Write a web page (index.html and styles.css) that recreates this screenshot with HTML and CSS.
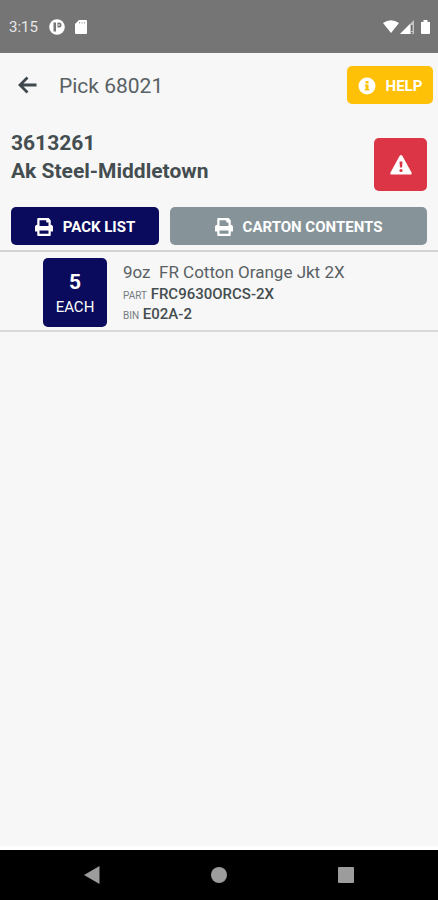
FILE: index.html
```html
<!DOCTYPE html>
<html lang="en">
<head>
<meta charset="utf-8">
<meta name="viewport" content="width=device-width, initial-scale=1">
<title>Pick 68021</title>
<link rel="stylesheet" href="styles.css">
</head>
<body>
<svg class="defs" width="0" height="0" aria-hidden="true"><symbol id="print" viewBox="0 0 512 512"><path fill="#fff" d="M448 192V77.250c0-8.490-3.370-16.620-9.370-22.630L393.370 9.370c-6-6-14.140-9.370-22.630-9.370H96C78.330 0 64 14.330 64 32v160c-35.350 0-64 28.650-64 64v112c0 8.840 7.160 16 16 16h48v96c0 17.670 14.330 32 32 32h320c17.670 0 32-14.330 32-32v-96h48c8.840 0 16-7.160 16-16V256c0-35.350-28.650-64-64-64zm-64 256H128v-96h256v96zm0-224H128V64h192v48c0 8.840 7.160 16 16 16h48v96z"/></symbol></svg>
<div class="status">
  <span class="clock">3:15</span>
  <svg class="dot" width="16" height="16" viewBox="0 0 16 16" aria-hidden="true"><circle cx="8" cy="8" r="7.800" fill="#fff"/><path d="M4.500 3.500h2.500v9H4.500zM8.500 3.500h1.500a2.500 2.500 0 0 1 0 5H8.500z" fill="#757575"/><circle cx="10" cy="6" r=".8" fill="#fff"/></svg>
  <svg class="card" width="12" height="14" viewBox="0 0 12 14" aria-hidden="true"><path d="M4 0h7a1 1 0 0 1 1 1v12a1 1 0 0 1-1 1H1a1 1 0 0 1-1-1V4z" fill="#fff"/><path d="M4 2h1v1.500H4zM6.500 2h1v1.500h-1zM9 2h1v1.500H9z" fill="#a5a5a5"/></svg>
  <svg class="signals" width="48" height="16" viewBox="0 0 48 16" aria-hidden="true"><path d="M0 4Q8-1.500 16 4L8 14z" fill="#fff"/><path d="M17 15 31 1v14z" fill="#c4c4c4"/><path d="M17 15 27 5v10z" fill="#fff"/><path d="M28 6h1.500v6H28zM28 13h1.500v1.500H28z" fill="#666"/><path d="M38 3h2.500V1h4v2H47v11a1 1 0 0 1-1 1h-7a1 1 0 0 1-1-1z" fill="#fff"/></svg>
</div>
<header class="header">
  <button class="back" type="button" aria-label="Back"><svg width="20" height="18" viewBox="0 0 20 18"><path d="M18.500 9H3M9.500 1.500 2 9l7.500 7.500" fill="none" stroke="#3f484c" stroke-width="2.800"/></svg></button>
  <h1>Pick 68021</h1>
  <button class="btn help" type="button"><svg width="18" height="18" viewBox="0 0 18 18" aria-hidden="true"><circle cx="9" cy="9" r="8.500" fill="#fff"/><path d="M7.500 4h3v2.500h-3zM7 7.500h3.500v4.500h.7v1.500H6.800V12h.7V9H7z" fill="#ffc107"/></svg>HELP</button>
</header>
<main>
  <section class="order">
    <h2>3613261<br>Ak Steel-Middletown</h2>
    <button class="btn alert" type="button" aria-label="Report a problem"><svg width="22" height="20" viewBox="0 0 22 20"><path d="M9.700.8a1.500 1.500 0 0 1 2.600 0l9.200 16.700a1.400 1.400 0 0 1-1.200 2.100H1.700a1.400 1.400 0 0 1-1.200-2.100z" fill="#fff"/><path d="M9.500 6.500h3l-.4 6H9.900z" fill="#dc3545"/><circle cx="11" cy="15.500" r="1.600" fill="#dc3545"/></svg></button>
  </section>
  <div class="actions">
    <button class="btn pack" type="button"><svg width="18" height="18" aria-hidden="true"><use href="#print"/></svg>PACK LIST</button>
    <button class="btn carton" type="button"><svg width="18" height="18" aria-hidden="true"><use href="#print"/></svg>CARTON CONTENTS</button>
  </div>
  <section class="item">
    <button class="btn qty" type="button"><strong>5</strong><span>EACH</span></button>
    <div class="details">
      <p class="name">9oz&nbsp; FR Cotton Orange Jkt 2X</p>
      <p class="meta"><span>PART</span> <b>FRC9630ORCS-2X</b></p>
      <p class="meta"><span>BIN</span> <b>E02A-2</b></p>
    </div>
  </section>
</main>
<nav class="nav" aria-label="System">
  <button type="button" aria-label="Back"><svg width="18" height="20" viewBox="0 0 18 20"><path d="M1 10 16.500 1v18z" fill="#9c9c9c"/></svg></button>
  <button type="button" aria-label="Home"><svg width="18" height="18" viewBox="0 0 18 18"><circle cx="9" cy="9" r="8" fill="#9c9c9c"/></svg></button>
  <button type="button" aria-label="Recent apps"><svg width="18" height="18" viewBox="0 0 18 18"><rect x="1" y="1" width="16" height="16" rx="1" fill="#9c9c9c"/></svg></button>
</nav>
</body>
</html>
```
FILE: styles.css
```css
* { box-sizing: border-box; }
body {
  margin: 0;
  min-height: 100vh;
  display: flex;
  flex-direction: column;
  background: #f7f7f7;
  color: #444d50;
  font-family: Roboto, "Liberation Sans", sans-serif;
}
h1, h2, p { margin: 0; }
button { border: 0; padding: 0; background: none; font: inherit; color: inherit; }
svg { display: block; flex: none; }
.defs { position: absolute; }

.status {
  display: flex;
  align-items: center;
  height: 53px;
  padding: 1px 7px 0 9px;
  background: #757575;
  color: #e8e8e8;
  font-size: 15px;
}
.dot { margin-left: 11px; }
.card { margin-left: 10px; }
.signals { margin-left: auto; }

.header {
  display: flex;
  align-items: center;
  height: 64px;
  padding: 0 5px 0 18px;
}
h1 { margin-left: 21px; font-size: 21px; line-height: 28px; padding-top: 2px; font-weight: 400; color: #596164; }

.btn {
  display: flex;
  align-items: center;
  justify-content: center;
  gap: 10px;
  height: 38px;
  border-radius: 5px;
  color: #fff;
  font-size: 15px;
  line-height: 20px;
  padding-top: 1px;
  font-weight: 700;
}
.help { width: 86px; margin-left: auto; background: #ffc107; }

.order {
  display: flex;
  justify-content: space-between;
  padding: 12px 11px 16px;
}
h2 { font-size: 21px; line-height: 28px; font-weight: 700; }
.alert { width: 53px; height: 53px; margin-top: 9px; background: #dc3545; }

.actions {
  display: grid;
  grid-template-columns: 148fr 257fr;
  gap: 11px;
  padding: 0 11px 5px;
}
.pack, .qty { background: #0a0b5c; }
.carton { background: #86949a; }

.item {
  display: flex;
  gap: 16px;
  padding: 6px 16px 3px 43px;
  border-top: 2px solid #d3d3d3;
  border-bottom: 2px solid #d9d9d9;
}
.qty { flex-direction: column; gap: 2px; width: 64px; height: 69px; font-weight: 400; }
.qty strong { font-size: 21px; line-height: 26px; }
.details { padding-top: 2px; }
.name { font-size: 17px; line-height: 24px; color: #596164; }
.meta { font-size: 15px; line-height: 20px; }
.meta span { font-size: 10px; line-height: 1; color: #747b7e; }
.meta b { font-weight: 500; }

.nav {
  display: flex;
  justify-content: center;
  align-items: center;
  gap: 109px;
  height: 54px;
  margin-top: auto;
  border-top: 4px solid #fff;
  background: #000;
}
```
